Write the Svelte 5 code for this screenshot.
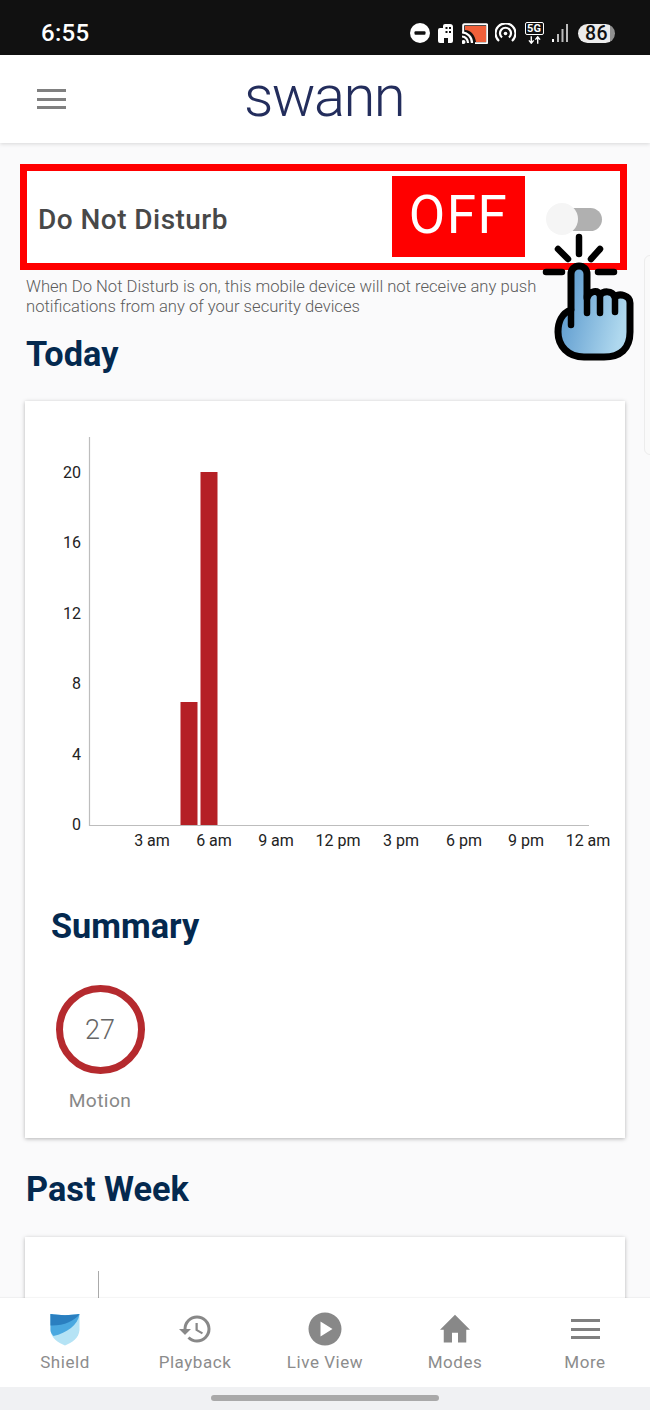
<script>
  const yTicks = [
    { label: '20', y: 71 },
    { label: '16', y: 141 },
    { label: '12', y: 212 },
    { label: '8', y: 282 },
    { label: '4', y: 353 },
    { label: '0', y: 423 }
  ];
  const xTicks = [
    { label: '3 am', x: 127 },
    { label: '6 am', x: 189 },
    { label: '9 am', x: 251 },
    { label: '12 pm', x: 313 },
    { label: '3 pm', x: 376 },
    { label: '6 pm', x: 439 },
    { label: '9 pm', x: 501 },
    { label: '12 am', x: 563 }
  ];
  const bars = [
    { x: 155.5, y: 301, h: 123 },
    { x: 175.5, y: 71, h: 353 }
  ];
</script>

<div class="page">
  <div class="status">
    <span class="time">6:55</span>
    <div class="status-icons">
      <svg class="si" width="20" height="20" viewBox="0 0 20 20"><circle cx="10" cy="10" r="10" fill="#fff"/><rect x="4.500" y="8.200" width="11" height="3.600" rx="1" fill="#111"/></svg>
      <svg class="si" width="18" height="19" viewBox="0 0 18 19"><path d="M1 6a2 2 0 0 1 2-2h3V2a2 2 0 0 1 2-2h5a3 3 0 0 1 3 3v14a2 2 0 0 1-2 2h-3v-5H7v5H3a2 2 0 0 1-2-2z" fill="#fff"/><rect x="8.500" y="3" width="2" height="2" fill="#111"/><rect x="12" y="3" width="2" height="2" fill="#111"/><rect x="8.500" y="7" width="2" height="2" fill="#111"/><rect x="12" y="7" width="2" height="2" fill="#111"/></svg>
      <svg class="si" width="26" height="21" viewBox="0 0 26 21"><path d="M1.200 9V2.200a1 1 0 0 1 1-1h22a1 1 0 0 1 1 1v17a1 1 0 0 1-1 1H13" fill="none" stroke="#fff" stroke-width="2"/><path d="M3 3h21v16H14C13 12 9 7 3 7z" fill="#f0603a"/><path d="M0 9.500c5.500 0 10 4.500 10 10.500M0 13.500c3.500 0 6 3 6 6.500" fill="none" stroke="#fff" stroke-width="2.200"/><circle cx="1.500" cy="19" r="2" fill="#fff"/></svg>
      <svg class="si" width="21" height="21" viewBox="0 0 21 21"><path d="M4 18a10 10 0 1 1 13 0" fill="none" stroke="#fff" stroke-width="2.200"/><path d="M7 14.500a5.500 5.500 0 1 1 7 0" fill="none" stroke="#fff" stroke-width="2.200"/><circle cx="10.500" cy="10.500" r="1.800" fill="#fff"/></svg>
      <div class="fiveg">
        <span class="fiveg-label">5G</span>
        <svg width="15" height="8" viewBox="0 0 14 7"><path d="M4 0v6M1.800 3.800 4 6.500l2.200-2.700M10 7V1M7.800 3.200 10 .5l2.200 2.700" fill="none" stroke="#fff" stroke-width="1.300"/></svg>
      </div>
      <svg class="si" width="16" height="20" viewBox="0 0 16 20"><rect x="0" y="16" width="2" height="3" fill="#fff"/><rect x="5" y="11" width="2" height="8" fill="#bbb"/><rect x="9.500" y="6" width="2" height="13" fill="#bbb"/><rect x="14" y="1" width="2" height="18" fill="#bbb"/></svg>
      <div class="battery"><span>86</span></div>
    </div>
  </div>

  <header class="topbar">
    <div class="burger"><i></i><i></i><i></i></div>
    <span class="logo">swann</span>
  </header>

  <main class="content">
    <section class="dnd">
      <span class="dnd-label">Do Not Disturb</span>
      <div class="toggle"><div class="track"></div><div class="thumb"></div></div>
      <div class="red-frame"></div>
      <div class="off-tag">OFF</div>
    </section>
    <p class="hint">When Do Not Disturb is on, this mobile device will not receive any push<br />notifications from any of your security devices</p>

    <h2 class="title">Today</h2>
    <section class="card today-card">
      <svg class="chart" width="600" height="470" viewBox="0 0 600 470">
        <path d="M64.500 36V424.500H564" fill="none" stroke="#bdbdbd" stroke-width="1.200"/>
        {#each bars as b}
          <rect x={b.x} y={b.y} width="17" height={b.h} fill="#b52025"/>
        {/each}
        {#each yTicks as t}
          <text class="tick" x="56" y={t.y + 6} text-anchor="end">{t.label}</text>
        {/each}
        {#each xTicks as t}
          <text class="tick" x={t.x} y="445" text-anchor="middle">{t.label}</text>
        {/each}
      </svg>
      <h2 class="title summary">Summary</h2>
      <div class="stat">
        <div class="ring">27</div>
        <span class="stat-label">Motion</span>
      </div>
    </section>

    <h2 class="title week">Past Week</h2>
    <section class="card week-card"><div class="week-axis"></div></section>
  </main>

  <nav class="tabs">
    <div class="tab">
      <svg class="tab-icon" width="40" height="36" viewBox="0 0 40 36">
        <path d="M5.500 3C14 4.500 26 4.500 34.500 3V19C34 27 27 31.500 20 34.500C13 31.500 6 27 5.500 19Z" fill="#b5e3f5"/>
        <path d="M5.500 3C14 4.500 26 4.500 34.500 3C33 14 22 22 8.500 25C6.500 23 5.500 21 5.500 19Z" fill="#4aa8e0"/>
        <path d="M5.500 3C14 4.500 26 4.500 34.500 3C30 10 18 15 5.500 14.500Z" fill="#2a7fc0"/>
      </svg>
      <span>Shield</span>
    </div>
    <div class="tab">
      <svg class="tab-icon" width="37" height="36" viewBox="0 0 24 24"><path fill="#888" d="M13 3a9 9 0 0 0-9 9H1l3.890 3.890.07.140L9 12H6c0-3.870 3.130-7 7-7s7 3.130 7 7-3.130 7-7 7c-1.930 0-3.680-.79-4.940-2.060l-1.420 1.420A8.954 8.954 0 0 0 13 21a9 9 0 0 0 0-18zm-1 5v5l4.280 2.540.72-1.210-3.500-2.080V8H12z"/></svg>
      <span>Playback</span>
    </div>
    <div class="tab">
      <svg class="tab-icon" width="36" height="36" viewBox="0 0 24 24"><path fill="#888" d="M12 1a11 11 0 1 0 0 22 11 11 0 0 0 0-22zm-3 16V7l8 5-8 5z"/></svg>
      <span>Live View</span>
    </div>
    <div class="tab">
      <svg class="tab-icon" width="38" height="36" viewBox="0 0 24 24"><path fill="#888" d="M10 21v-6.500h4V21h5.500v-8.500H22L12 2.500 2 12.500h2.500V21z"/></svg>
      <span>Modes</span>
    </div>
    <div class="tab">
      <div class="tab-icon burger-icon"><i></i><i></i><i></i></div>
      <span>More</span>
    </div>
  </nav>
  <div class="gesture"><div class="pill"></div></div>

  <div class="side-peek"></div>

  <svg class="hand" width="100" height="130" viewBox="540 232 100 130">
    <defs>
      <linearGradient id="handFill" x1="0" y1="0" x2="1" y2="0.3">
        <stop offset="0" stop-color="#4f90c9"/>
        <stop offset="1" stop-color="#afd8ee"/>
      </linearGradient>
    </defs>
    <path d="M579 237V254M558 249 568 259M600 249 591 259M546 272H562M598 272H614" fill="none" stroke="#000" stroke-width="6.500" stroke-linecap="round"/>
    <path d="M571 310V274a8 8 0 0 1 16 0V298c3-8 11-8 13-3 3-4 12-5 15 2 4-4 15-2 15 6V332c0 17-10 25-26 25H584C568 357 558 346 558 332 558 322 562 313 571 310Z" fill="url(#handFill)" stroke="#000" stroke-width="7" stroke-linejoin="round"/>
    <path d="M571 310V325M587 296V313M600 295V313M615 298V312" fill="none" stroke="#000" stroke-width="6.500" stroke-linecap="round"/>
  </svg>
</div>

<style>
  :global(body) {
    margin: 0;
    background: #fafafb;
  }

  .page {
    position: relative;
    width: 650px;
    height: 1410px;
    display: flex;
    flex-direction: column;
    overflow: hidden;
    background: #fafafb;
    font-family: Roboto, 'Liberation Sans', sans-serif;
  }

  /* status bar */
  .status {
    flex: 0 0 55px;
    box-sizing: border-box;
    display: flex;
    align-items: center;
    justify-content: space-between;
    padding: 11px 35px 0 41px;
    background: #111;
    color: #fff;
  }
  .time {
    font-size: 24px;
    font-weight: 500;
    letter-spacing: 0.3px;
  }
  .status-icons {
    display: flex;
    align-items: center;
    gap: 7px;
  }
  .si {
    display: block;
    flex: none;
  }
  .fiveg {
    width: 20px;
    display: flex;
    flex-direction: column;
    align-items: center;
    gap: 1px;
    margin: 0 1px;
  }
  .fiveg-label {
    box-sizing: border-box;
    width: 19px;
    height: 13px;
    border: 1px solid #fff;
    border-radius: 2px;
    font-size: 11px;
    line-height: 11px;
    font-weight: 700;
    text-align: center;
  }
  .fiveg svg {
    display: block;
  }
  .battery {
    width: 37px;
    height: 19px;
    margin-left: 3px;
    border-radius: 10px;
    background: linear-gradient(90deg, #ececec 86%, #8f8f8f 86%);
    color: #111;
    display: flex;
    align-items: center;
    justify-content: center;
    font-size: 19.500px;
    font-weight: 500;
    letter-spacing: 0.5px;
  }

  /* top bar */
  .topbar {
    flex: 0 0 88px;
    box-sizing: border-box;
    position: relative;
    z-index: 2;
    display: flex;
    align-items: center;
    padding-left: 37px;
    background: #fff;
    box-shadow: 0 1px 4px rgba(0, 0, 0, 0.14);
  }
  .burger {
    flex: none;
    display: flex;
    flex-direction: column;
    gap: 5.500px;
    width: 29px;
  }
  .burger i,
  .burger-icon i {
    display: block;
    height: 3px;
    background: #808080;
  }
  .logo {
    margin-left: 178px;
    margin-top: -6px;
    font-size: 58px;
    line-height: 60px;
    font-weight: 300;
    letter-spacing: -1.600px;
    color: #232d5c;
  }

  /* content */
  .content {
    flex: 1;
    min-height: 0;
    overflow: hidden;
    padding: 28px 25px 0;
  }
  .dnd {
    position: relative;
    box-sizing: border-box;
    height: 92px;
    margin: 0 5px 0 2px;
    padding: 4px 18px 0 11px;
    display: flex;
    align-items: center;
    justify-content: space-between;
    background: #fff;
  }
  .dnd-label {
    margin-top: 1px;
    font-size: 28px;
    font-weight: 500;
    letter-spacing: 0.45px;
    color: #484848;
  }
  .red-frame {
    position: absolute;
    inset: -7px;
    border: 7px solid #f00;
    pointer-events: none;
  }
  .off-tag {
    position: absolute;
    left: 365px;
    top: 5px;
    width: 133px;
    height: 81px;
    background: #f00;
    color: #fff;
    font-size: 53px;
    line-height: 78px;
    font-weight: 400;
    letter-spacing: 1.500px;
    text-align: center;
  }
  .toggle {
    position: relative;
    width: 56px;
    height: 34px;
    display: flex;
    align-items: center;
    justify-content: flex-end;
  }
  .track {
    width: 40px;
    height: 23px;
    border-radius: 12px;
    background: #b0b0b0;
  }
  .thumb {
    position: absolute;
    left: 0;
    top: 1px;
    width: 32px;
    height: 32px;
    border-radius: 50%;
    background: #f5f5f5;
  }
  .hint {
    margin: 14px 0 0 1px;
    font-size: 16.630px;
    line-height: 20px;
    font-weight: 300;
    color: #5c5c5c;
  }
  .title {
    margin: 17px 0 0 1px;
    font-size: 34.300px;
    line-height: 40px;
    font-weight: 700;
    color: #04294f;
  }
  .card {
    background: #fff;
    box-shadow: 0 1px 4px rgba(0, 0, 0, 0.28);
  }
  .today-card {
    margin-top: 27px;
    height: 737px;
    box-sizing: border-box;
  }
  .chart {
    display: block;
  }
  .tick {
    font-family: Roboto, 'Liberation Sans', sans-serif;
    font-size: 16px;
    fill: #222;
  }
  .summary {
    margin: 35px 0 0 26px;
  }
  .stat {
    width: 90px;
    margin: 39px 0 0 30px;
    display: flex;
    flex-direction: column;
    align-items: center;
  }
  .ring {
    box-sizing: border-box;
    flex: none;
    width: 89px;
    height: 89px;
    padding-top: 1px;
    border: 7px solid #b52a2e;
    border-radius: 50%;
    display: flex;
    align-items: center;
    justify-content: center;
    font-size: 27px;
    font-weight: 300;
    color: #666;
  }
  .stat-label {
    margin-top: 15px;
    font-size: 19.200px;
    letter-spacing: 0.4px;
    color: #888;
  }
  .week {
    margin-top: 31px;
  }
  .week-card {
    position: relative;
    margin-top: 28px;
    height: 120px;
  }
  .week-axis {
    position: absolute;
    left: 73px;
    top: 34px;
    width: 1px;
    height: 86px;
    background: #aaa;
  }

  /* bottom nav */
  .tabs {
    flex: 0 0 89px;
    position: relative;
    z-index: 2;
    display: grid;
    grid-template-columns: repeat(5, 130px);
    background: #fff;
    box-shadow: 0 -1px 1px rgba(0, 0, 0, 0.04);
  }
  .tab {
    display: flex;
    flex-direction: column;
    align-items: center;
    padding-top: 13px;
    font-size: 17px;
    line-height: 22px;
    letter-spacing: 0.55px;
    color: #8c8c8c;
  }
  .tab-icon {
    display: block;
    flex: none;
    margin-bottom: 4px;
  }
  .burger-icon {
    box-sizing: border-box;
    width: 29px;
    height: 36px;
    padding-top: 8px;
    display: flex;
    flex-direction: column;
    gap: 5.500px;
  }
  .gesture {
    flex: 0 0 23px;
    box-sizing: border-box;
    position: relative;
    z-index: 2;
    padding-top: 8px;
    background: #f0f1f3;
  }
  .pill {
    width: 228px;
    height: 6px;
    margin: 0 auto;
    border-radius: 3px;
    background: #a9a9a9;
  }

  /* overlays */
  .side-peek {
    position: absolute;
    left: 644px;
    top: 255px;
    width: 20px;
    height: 200px;
    box-sizing: border-box;
    border: 1px solid #ececec;
    border-radius: 6px;
    background: #fafafa;
  }
  .hand {
    position: absolute;
    left: 540px;
    top: 232px;
    z-index: 3;
  }
</style>
